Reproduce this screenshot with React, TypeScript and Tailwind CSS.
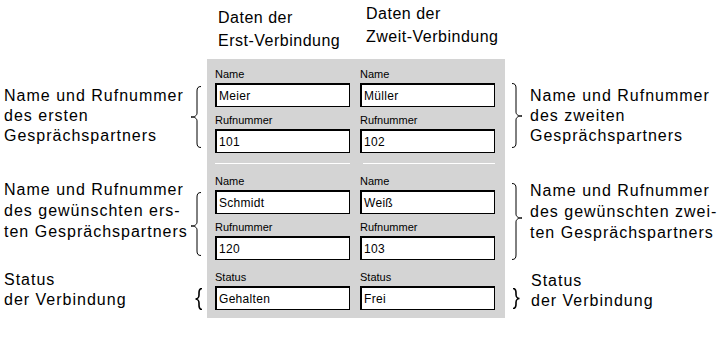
import React from "react";

function Brace({ dir, h, tip, w = 14, vx = 5, tx = 11, sw = 1 }: { dir: "left" | "right"; h: number; tip?: number; w?: number; vx?: number; tx?: number; sw?: number }) {
  const t = tip ?? h / 2;
  const d = `M1,0.5 C${vx - 1},0.5 ${vx},2 ${vx},5 L${vx},${t - 4} C${vx},${t - 1.5} ${vx + 2},${t} ${tx},${t} C${vx + 2},${t} ${vx},${t + 1.5} ${vx},${t + 4} L${vx},${h - 5} C${vx},${h - 2} ${vx - 1},${h - 0.5} 1,${h - 0.5}`;
  return (
    <svg width={w} height={h} viewBox={`0 0 ${w} ${h}`} className="shrink-0 block">
      <g transform={dir === "left" ? `translate(${w},0) scale(-1,1)` : undefined}>
        <path d={d} fill="none" stroke="#000" strokeWidth={sw} />
      </g>
    </svg>
  );
}

function Field({ label, value }: { label: string; value: string }) {
  return (
    <div className="flex flex-col">
      <div className="h-[14px] text-[11px] leading-[14px] text-black">{label}</div>
      <div className="mt-[2px] h-[24px] bg-white border border-black border-t-2 border-l-2 pl-[2px] flex items-center text-[12px] tracking-[0.3px] text-black">
        {value}
      </div>
    </div>
  );
}

export default function App() {
  return (
    <div className="w-[717px] h-[337px] bg-white text-black overflow-hidden" style={{ fontFamily: '"Liberation Sans", Arial, sans-serif' }}>
      {/* Headers */}
      <div className="h-[59px] flex pl-[218px] text-[16px] leading-[23px] tracking-[0.5px] whitespace-nowrap">
        <div className="w-[148px] pt-[6px]">
          <div>Daten der</div>
          <div>Erst-Verbindung</div>
        </div>
        <div className="pt-[2px]">
          <div>Daten der</div>
          <div>Zweit-Verbindung</div>
        </div>
      </div>

      <div className="flex items-start">
        {/* Left column */}
        <div className="w-[207px] shrink-0 flex flex-col text-[16px] tracking-[1px] whitespace-nowrap">
          <div className="mt-[27px] flex items-start">
            <div className="flex-1 pl-[4px] leading-[20px]">
              <div>Name und Rufnummer</div>
              <div>des ersten</div>
              <div>Gesprächspartners</div>
            </div>
            <div className="mr-[5px]">
              <Brace dir="left" h={62} tip={31} />
            </div>
          </div>
          <div className="mt-[31px] flex items-start">
            <div className="flex-1 pl-[4px] leading-[21px]">
              <div>Name und Rufnummer</div>
              <div>des gewünschten ers-</div>
              <div>ten Gesprächspartners</div>
            </div>
            <div className="mr-[5px] mt-[13px]">
              <Brace dir="left" h={64} tip={34} />
            </div>
          </div>
          <div className="mt-[14px] flex items-start">
            <div className="flex-1 pl-[4px] leading-[20px]">
              <div>Status</div>
              <div>der Verbindung</div>
            </div>
            <div className="mr-[4px] mt-[18px]">
              <Brace dir="left" h={22} w={8} vx={4} tx={7.5} sw={1.6} />
            </div>
          </div>
        </div>

        {/* Panel */}
        <div className="w-[298px] h-[259px] shrink-0 bg-[#d4d4d4] pl-[8px] pr-[8px] pt-[8px] pb-[8px]">
          <div className="grid grid-cols-[135px_135px] gap-x-[10px]">
            <Field label="Name" value="Meier" />
            <Field label="Name" value="Müller" />
            <div className="mt-[6px]"><Field label="Rufnummer" value="101" /></div>
            <div className="mt-[6px]"><Field label="Rufnummer" value="102" /></div>
            <div className="mt-[10px] h-px bg-white" />
            <div className="mt-[10px] h-px bg-white ml-[3px]" />
            <div className="mt-[10px]"><Field label="Name" value="Schmidt" /></div>
            <div className="mt-[10px]"><Field label="Name" value="Weiß" /></div>
            <div className="mt-[6px]"><Field label="Rufnummer" value="120" /></div>
            <div className="mt-[6px]"><Field label="Rufnummer" value="103" /></div>
            <div className="mt-[10px]"><Field label="Status" value="Gehalten" /></div>
            <div className="mt-[10px]"><Field label="Status" value="Frei" /></div>
          </div>
        </div>

        {/* Right column */}
        <div className="flex-1 flex flex-col text-[16px] tracking-[1px] whitespace-nowrap">
          <div className="mt-[24px] flex items-start">
            <div className="ml-[6px]">
              <Brace dir="right" h={65} tip={33} />
            </div>
            <div className="ml-[5px] mt-[3px] leading-[20px]">
              <div>Name und Rufnummer</div>
              <div>des zweiten</div>
              <div>Gesprächspartners</div>
            </div>
          </div>
          <div className="mt-[32px] flex items-start">
            <div className="ml-[6px] mt-[3px]">
              <Brace dir="right" h={77} tip={35} />
            </div>
            <div className="ml-[5px] leading-[21px]">
              <div>Name und Rufnummer</div>
              <div>des gewünschten zwei-</div>
              <div>ten Gesprächspartners</div>
            </div>
          </div>
          <div className="mt-[11px] flex items-start">
            <div className="ml-[7px] mt-[17px]">
              <Brace dir="right" h={21} w={8} vx={4} tx={7.5} sw={1.6} />
            </div>
            <div className="ml-[11px] leading-[20px]">
              <div>Status</div>
              <div>der Verbindung</div>
            </div>
          </div>
        </div>
      </div>
    </div>
  );
}
